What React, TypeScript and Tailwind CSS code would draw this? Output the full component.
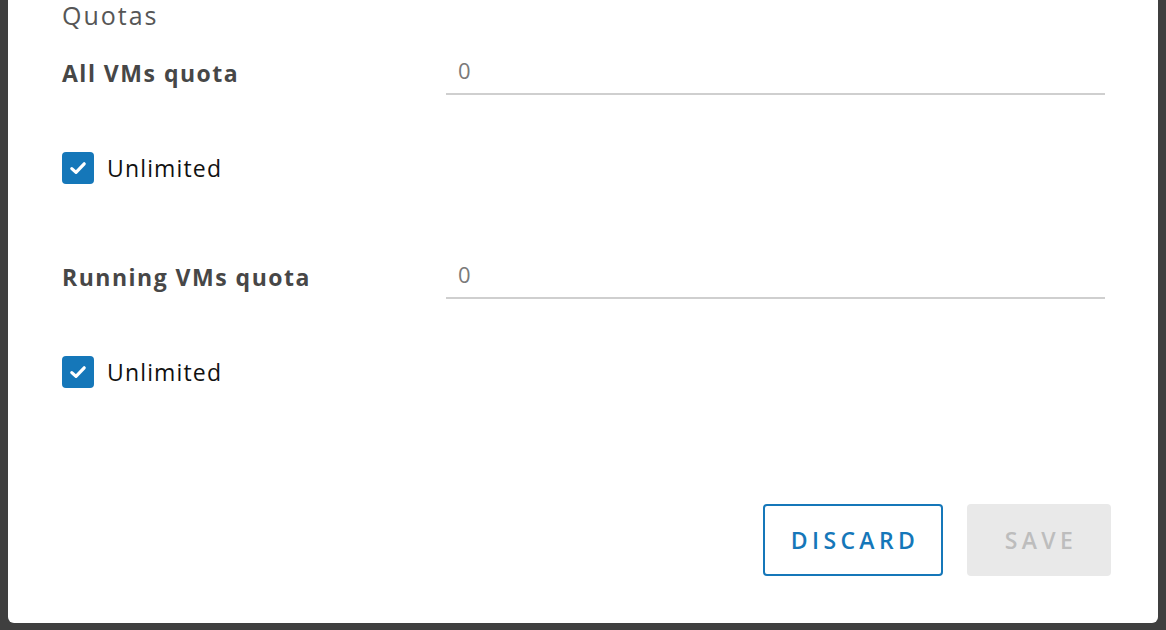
import React from "react";

function CheckRow({ label }: { label: string }) {
  return (
    <label className="flex h-[32px] items-center gap-[13px]">
      <span className="flex h-[32px] w-[32px] items-center justify-center rounded-[4px] bg-[#1577b9]">
        <svg width="18" height="18" viewBox="0 0 18 18" fill="none">
          <path
            d="M2.8 9.6 L7 13.4 L15.2 4.8"
            stroke="white"
            strokeWidth="3.2"
            strokeLinecap="round"
            strokeLinejoin="round"
          />
        </svg>
      </span>
      <span className="text-[23px] leading-[32px] tracking-[0.05em] text-[#111]">{label}</span>
    </label>
  );
}

function QuotaField({ label }: { label: string }) {
  return (
    <div className="flex items-start">
      <div className="w-[384px] pt-[8px] text-[23px] font-bold leading-[30px] tracking-[0.065em] text-[#474747]">
        {label}
      </div>
      <div className="w-[659px] border-b-2 border-[#cfcfcf] pb-[8px] pl-[12px] pt-[5px] text-[22px] leading-[30px] text-[#7a7a7a]">
        0
      </div>
    </div>
  );
}

export default function App() {
  return (
    <div
      className="h-[630px] w-[1166px] overflow-hidden bg-[#3f3f3f]"
      style={{ fontFamily: "'Open Sans', Lato, sans-serif" }}
    >
      <div className="ml-[8px] h-[623px] w-[1150px] rounded-b-[6px] bg-white pl-[54px]">
        <div className="pt-[1px] text-[25px] font-normal leading-[29px] tracking-[0.08em] text-[#565656]">Quotas</div>
        <div className="mt-[20px]">
          <QuotaField label="All VMs quota" />
        </div>
        <div className="mt-[57px]">
          <CheckRow label="Unlimited" />
        </div>
        <div className="mt-[70px]">
          <QuotaField label="Running VMs quota" />
        </div>
        <div className="mt-[57px]">
          <CheckRow label="Unlimited" />
        </div>
        <div className="mt-[116px] flex justify-end gap-[24px] pr-[47px]">
          <button className="h-[72px] w-[180px] rounded-[4px] border-2 border-[#1577b9] pl-[4px] text-[23px] font-semibold tracking-[0.19em] text-[#1577b9]">
            DISCARD
          </button>
          <button className="h-[72px] w-[144px] rounded-[4px] bg-[#e9e9e9] pl-[4px] text-[23px] font-semibold tracking-[0.19em] text-[#bdbdbd]">
            SAVE
          </button>
        </div>
      </div>
    </div>
  );
}
